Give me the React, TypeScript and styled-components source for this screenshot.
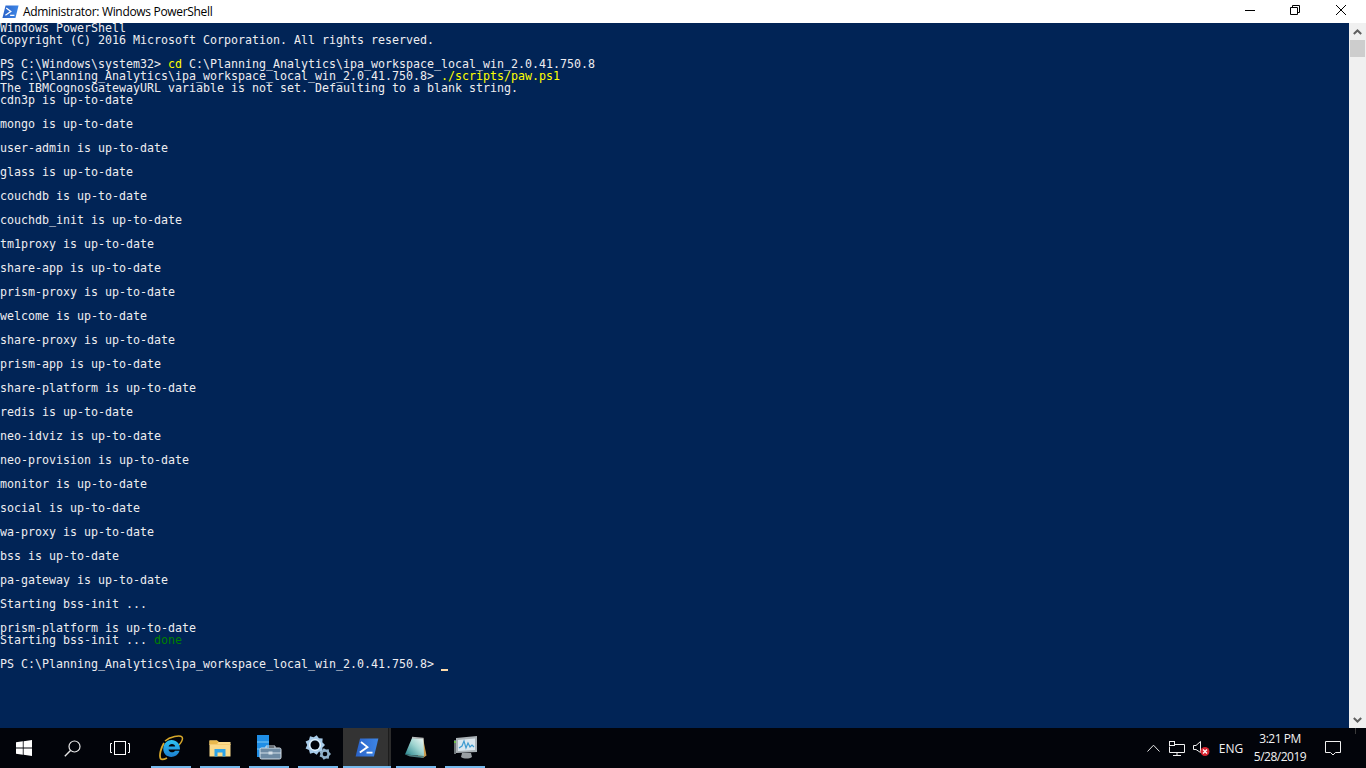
import React from 'react';
import styled, { createGlobalStyle } from 'styled-components';

const GlobalStyle = createGlobalStyle`
  html, body {
    margin: 0;
    padding: 0;
    height: 100%;
    overflow: hidden;
    background: #012456;
  }
`;

const Page = styled.div`
  display: flex;
  flex-direction: column;
  width: 1366px;
  height: 768px;
  overflow: hidden;
  font-family: 'Open Sans', 'Noto Sans', sans-serif;
`;

const TitleBar = styled.div`
  display: flex;
  align-items: center;
  height: 23px;
  padding-right: 2px;
  box-sizing: border-box;
  flex: none;
  background: #ffffff;
  color: #000000;
`;

const TitleIcon = styled.div`
  display: flex;
  width: 23px;
  padding-left: 2px;
  box-sizing: border-box;
`;

const TitleText = styled.div`
  font-size: 12px;
  letter-spacing: -0.32px;
  flex: 1;
  white-space: nowrap;
  line-height: 23px;
`;

const WindowButton = styled.div<{ $width: number }>`
  display: flex;
  align-items: center;
  justify-content: center;
  width: ${(p) => p.$width}px;
  height: 23px;
  padding-bottom: 3px;
  box-sizing: border-box;
`;

const Main = styled.div`
  display: flex;
  flex: 1;
  min-height: 0;
`;

const Console = styled.pre`
  flex: 1;
  margin: 0;
  background: #012456;
  color: #eeedf0;
  font-family: 'DejaVu Sans Mono', 'Liberation Mono', monospace;
  font-size: 11.63px;
`;

const Line = styled.div`
  height: 12px;
  line-height: 10px;
  white-space: pre;
`;

const Keyword = styled.span<{ $color: string }>`
  color: ${(p) => p.$color};
`;

const Cursor = styled.span`
  display: inline-block;
  width: 7px;
  height: 2px;
  margin-left: 7px;
  background: #fedba9;
  vertical-align: -3px;
`;

const ScrollBar = styled.div`
  display: flex;
  flex-direction: column;
  width: 17px;
  flex: none;
  background: #f0f0f0;
`;

const ScrollArrow = styled.div`
  display: flex;
  align-items: center;
  justify-content: center;
  height: 17px;
  flex: none;
`;

const ScrollThumb = styled.div`
  height: 17px;
  margin: 0 1px;
  background: #cdcdcd;
`;

const ScrollTrack = styled.div`
  flex: 1;
`;

const TaskBar = styled.div`
  display: flex;
  align-items: stretch;
  height: 40px;
  flex: none;
  background: #02040a;
  color: #ffffff;
`;

const ShellButton = styled.div`
  display: flex;
  align-items: center;
  justify-content: center;
  width: 48px;
`;

const AppList = styled.div`
  display: flex;
  gap: 1px;
  margin-left: 3px;
`;

const AppButton = styled.div<{ $active?: boolean }>`
  display: flex;
  align-items: center;
  justify-content: center;
  width: 48px;
  height: 40px;
  box-sizing: border-box;
  position: relative;
  background: ${(p) => (p.$active ? 'linear-gradient(90deg, #333333 0, #333333 45px, #1c1c1c 45px, #1c1c1c 46px, #2b2b2b 46px)' : 'transparent')};

  &::after {
    content: '';
    position: absolute;
    bottom: 0;
    height: 2px;
    left: ${(p) => (p.$active ? '0' : '4px')};
    right: ${(p) => (p.$active ? '0' : '4px')};
    background: #76b9ed;
  }
`;

const Tray = styled.div`
  display: flex;
  margin-left: auto;
`;

const TrayItem = styled.div<{ $width: number }>`
  display: flex;
  align-items: center;
  justify-content: center;
  width: ${(p) => p.$width}px;
  font-size: 12px;
  color: #f2f2f2;
`;

const Clock = styled.div`
  display: flex;
  flex-direction: column;
  align-items: center;
  justify-content: center;
  width: 62px;
  font-size: 12px;
  letter-spacing: -0.5px;
  line-height: 18px;
  color: #f2f2f2;
  white-space: nowrap;
`;

const ShowDesktop = styled.div`
  width: 11px;
  border-left: 1px solid #3a3a3a;
  height: 6px;
  box-sizing: border-box;
`;

const services = [
  'cdn3p', 'mongo', 'user-admin', 'glass', 'couchdb', 'couchdb_init', 'tm1proxy', 'share-app',
  'prism-proxy', 'welcome', 'share-proxy', 'prism-app', 'share-platform', 'redis', 'neo-idviz',
  'neo-provision', 'monitor', 'social', 'wa-proxy', 'bss', 'pa-gateway',
];

const workspace = 'C:\\Planning_Analytics\\ipa_workspace_local_win_2.0.41.750.8';

function PsIcon({ size, id }: { size: number; id: string }) {
  return (
    <svg width={size} height={size * 0.8} viewBox="0 0 20 16">
      <defs>
        <linearGradient id={id} x1="0" x2="1" y1="0" y2="0">
          <stop offset="0" stopColor="#2a62c8" />
          <stop offset="1" stopColor="#3d86e6" />
        </linearGradient>
      </defs>
      <path d="M4.2 0.5H19.5L15.8 15.5H0.5Z" fill={`url(#${id})`} />
      <path d="M5 3.4L10.4 7.6L4 12" fill="none" stroke="#fff" strokeWidth="1.5" />
      <path d="M9.6 12.2H14.6" stroke="#fff" strokeWidth="1.5" />
    </svg>
  );
}

function IeIcon() {
  return (
    <svg width="26" height="26" viewBox="0 0 26 26">
      <defs>
        <linearGradient id="ieg" x1="0" x2="0" y1="0" y2="1">
          <stop offset="0" stopColor="#2fc4f2" />
          <stop offset="1" stopColor="#1b7fd0" />
        </linearGradient>
      </defs>
      <path d="M7 6C12 1.500 22 0 24 2C25.500 4 23 8 21 10" fill="none" stroke="#d8a82a" strokeWidth="1.500" />
      <path d="M6 8C3 13 1 20 2.500 23.500C3.500 25 6 24.500 9 23" fill="none" stroke="#d8a82a" strokeWidth="1.800" />
      <path d="M13.500 5C18.500 5 22 8.500 22 14.500H10.500C10.800 17.500 15.500 18.500 17 15.800H21.500C19.500 22.500 11.500 23.500 7.500 19.800C3 15 5.500 5 13.500 5ZM10.600 11.500H17.200C17 8 11 8 10.600 11.500Z" fill="url(#ieg)" fillRule="evenodd" />
    </svg>
  );
}

function FolderIcon() {
  return (
    <svg width="22" height="18" viewBox="0 0 22 18">
      <path d="M0.500 1.500H8L10 3H21.500V17.500H0.500Z" fill="#fbdb8c" />
      <path d="M0.500 1.500H8L9.500 3.500L7.500 5.500H0.500Z" fill="#e9b94e" />
      <path d="M0.500 5.500H21.500" stroke="#f5cc72" strokeWidth="1" />
      <path d="M5.500 17.500V10H16.500V17.500H13.500V13.500H8.500V17.500Z" fill="#2fa4e7" />
    </svg>
  );
}

function ServerManagerIcon() {
  return (
    <svg width="26" height="26" viewBox="0 0 26 26">
      <rect x="1" y="0" width="12" height="22" fill="#1f8ee6" />
      <path d="M1 7H13M1 14H13" stroke="#7fc8f5" strokeWidth="1" />
      <rect x="4" y="13" width="21" height="11" rx="1.500" fill="#6d8aa3" stroke="#d4dfe8" strokeWidth="1" />
      <path d="M4 18H25" stroke="#d4dfe8" strokeWidth="1" />
      <path d="M10 13V11H19V13" fill="none" stroke="#d4dfe8" strokeWidth="1" />
      <rect x="12.500" y="16.500" width="4" height="3" fill="#d4dfe8" />
    </svg>
  );
}

function gearPath(cx: number, cy: number, outer: number, inner: number, teeth: number) {
  const pts: string[] = [];
  for (let i = 0; i < teeth * 2; i++) {
    const r = i % 2 === 0 ? outer : inner;
    const a = (Math.PI * i) / teeth;
    pts.push(`${(cx + r * Math.cos(a)).toFixed(2)},${(cy + r * Math.sin(a)).toFixed(2)}`);
  }
  return pts.join(' ');
}

function GearsIcon() {
  return (
    <svg width="26" height="26" viewBox="0 0 26 26">
      <polygon points={gearPath(10, 10, 10, 7.800, 9)} fill="#a9cdea" />
      <circle cx="10" cy="10" r="4.500" fill="#02040a" />
      <circle cx="10" cy="10" r="5.500" fill="none" stroke="#e6f2fb" strokeWidth="1.200" />
      <polygon points={gearPath(20, 19, 6, 4.600, 7)} fill="#8fb0c9" />
      <circle cx="20" cy="19" r="2.300" fill="#02040a" />
    </svg>
  );
}

function NotepadIcon() {
  return (
    <svg width="24" height="24" viewBox="0 0 24 24">
      <defs>
        <linearGradient id="npg" x1="0" x2="1" y1="1" y2="0">
          <stop offset="0" stopColor="#1f7f88" />
          <stop offset="0.55" stopColor="#9fd4d0" />
          <stop offset="1" stopColor="#f2f8f6" />
        </linearGradient>
      </defs>
      <path d="M19 2L22.500 19.500L19 22L14 20Z" fill="#c99a4e" />
      <path d="M8 2L19.500 2.500L20 20L1 18.500Z" fill="url(#npg)" />
      <path d="M8 1.500L19.500 2.500" stroke="#b9bdbd" strokeWidth="1.500" />
      <path d="M1 18.500L20 20L19 22L6 20.500Z" fill="#4d7d80" />
    </svg>
  );
}

function PerfMonIcon() {
  return (
    <svg width="26" height="26" viewBox="0 0 26 26">
      <path d="M4 3L25 1V17L4 18Z" fill="#aab2b7" />
      <path d="M6 5L23 3.500V15L6 16Z" fill="#dbe7ee" />
      <path d="M7 13L10 11L12 6L14 13L16 8L18 12L20 10L22 12" fill="none" stroke="#3d9bd0" strokeWidth="1.200" />
      <path d="M10 18H19L20 22C17 24 12 24 9 22Z" fill="#989ea2" />
      <rect x="2" y="5" width="2" height="14" fill="#6d7478" />
      <rect x="2" y="6" width="2" height="2" fill="#6fc04a" />
    </svg>
  );
}

export default function App() {
  return (
    <Page>
      <GlobalStyle />
      <TitleBar>
        <TitleIcon>
          <PsIcon size={17} id="psTitle" />
        </TitleIcon>
        <TitleText>Administrator: Windows PowerShell</TitleText>
        <WindowButton $width={44}>
          <svg width="10" height="10" viewBox="0 0 10 10">
            <path d="M0 5.500H10" stroke="#000" strokeWidth="1" />
          </svg>
        </WindowButton>
        <WindowButton $width={46}>
          <svg width="10" height="10" viewBox="0 0 10 10">
            <path d="M0.500 2.500H7.500V9.500H0.500ZM2.500 2.500V0.500H9.500V7.500H7.500" fill="none" stroke="#000" strokeWidth="1" />
          </svg>
        </WindowButton>
        <WindowButton $width={46}>
          <svg width="10" height="10" viewBox="0 0 10 10">
            <path d="M0 0L10 10M10 0L0 10" stroke="#000" strokeWidth="1" />
          </svg>
        </WindowButton>
      </TitleBar>
      <Main>
        <Console>
          <Line>Windows PowerShell</Line>
          <Line>Copyright (C) 2016 Microsoft Corporation. All rights reserved.</Line>
          <Line />
          <Line>
            PS C:\Windows\system32&gt; <Keyword $color="#ffff00">cd</Keyword> {workspace}
          </Line>
          <Line>
            PS {workspace}&gt; <Keyword $color="#ffff00">./scripts/paw.ps1</Keyword>
          </Line>
          <Line>The IBMCognosGatewayURL variable is not set. Defaulting to a blank string.</Line>
          {services.map((name) => (
            <React.Fragment key={name}>
              <Line>{name} is up-to-date</Line>
              <Line />
            </React.Fragment>
          ))}
          <Line>Starting bss-init ...</Line>
          <Line />
          <Line>prism-platform is up-to-date</Line>
          <Line>
            Starting bss-init ... <Keyword $color="#008000">done</Keyword>
          </Line>
          <Line />
          <Line>
            PS {workspace}&gt;
            <Cursor />
          </Line>
        </Console>
        <ScrollBar>
          <ScrollArrow>
            <svg width="9" height="6" viewBox="0 0 9 6">
              <path d="M0.800 5L4.500 1.500L8.200 5" fill="none" stroke="#606060" strokeWidth="2" />
            </svg>
          </ScrollArrow>
          <ScrollThumb />
          <ScrollTrack />
          <ScrollArrow>
            <svg width="9" height="6" viewBox="0 0 9 6">
              <path d="M0.800 1L4.500 4.500L8.200 1" fill="none" stroke="#606060" strokeWidth="2" />
            </svg>
          </ScrollArrow>
        </ScrollBar>
      </Main>
      <TaskBar>
        <ShellButton>
          <svg width="16" height="16" viewBox="0 0 16 16">
            <path d="M0 2.300L6.800 1.300V7.500H0ZM7.600 1.200L16 0V7.500H7.600ZM0 8.400H6.800V14.700L0 13.700ZM7.600 8.400H16V16L7.600 14.800Z" fill="#ffffff" />
          </svg>
        </ShellButton>
        <ShellButton>
          <svg width="17" height="17" viewBox="0 0 17 17">
            <circle cx="10.500" cy="6.500" r="5.500" fill="none" stroke="#e8e8e8" strokeWidth="1.200" />
            <path d="M6.500 10.500L0.800 16.200" stroke="#e8e8e8" strokeWidth="1.400" />
          </svg>
        </ShellButton>
        <ShellButton>
          <svg width="20" height="14" viewBox="0 0 20 14">
            <rect x="4.500" y="0.500" width="11" height="13" fill="none" stroke="#fff" strokeWidth="1" />
            <path d="M2 2.500H0.500V11.500H2M18 2.500H19.500V11.500H18" fill="none" stroke="#fff" strokeWidth="1" />
          </svg>
        </ShellButton>
        <AppList>
          <AppButton><IeIcon /></AppButton>
          <AppButton><FolderIcon /></AppButton>
          <AppButton><ServerManagerIcon /></AppButton>
          <AppButton><GearsIcon /></AppButton>
          <AppButton $active><PsIcon size={24} id="psTask" /></AppButton>
          <AppButton><NotepadIcon /></AppButton>
          <AppButton><PerfMonIcon /></AppButton>
        </AppList>
        <Tray>
          <TrayItem $width={24}>
            <svg width="13" height="8" viewBox="0 0 13 8">
              <path d="M0.500 7.500L6.500 1.200L12.500 7.500" fill="none" stroke="#e8e8e8" strokeWidth="1" />
            </svg>
          </TrayItem>
          <TrayItem $width={24}>
            <svg width="16" height="15" viewBox="0 0 16 15">
              <path d="M3.500 3.500H15.500V11.500H0.500V5.500M8 11.500V14.500M4 14.500H12" fill="none" stroke="#f0f0f0" strokeWidth="1" />
              <rect x="0.500" y="0.500" width="5" height="4" fill="#02040a" stroke="#f0f0f0" strokeWidth="1" />
            </svg>
          </TrayItem>
          <TrayItem $width={24}>
            <svg width="17" height="15" viewBox="0 0 17 15">
              <path d="M0.500 4.500H3L7.500 0.500V11.500L3 8.500H0.500Z" fill="none" stroke="#f0f0f0" strokeWidth="1" />
              <circle cx="12" cy="10.500" r="4.500" fill="#d8232f" />
              <path d="M10 8.500L14 12.500M14 8.500L10 12.500" stroke="#fff" strokeWidth="1.300" />
            </svg>
          </TrayItem>
          <TrayItem $width={36}>ENG</TrayItem>
          <Clock>
            <span>3:21 PM</span>
            <span>5/28/2019</span>
          </Clock>
          <TrayItem $width={44}>
            <svg width="16" height="15" viewBox="0 0 16 15">
              <path d="M0.500 0.500H15.500V11.500H10.500L8 14L5.500 11.500H0.500Z" fill="none" stroke="#f0f0f0" strokeWidth="1" />
            </svg>
          </TrayItem>
          <ShowDesktop />
        </Tray>
      </TaskBar>
    </Page>
  );
}
